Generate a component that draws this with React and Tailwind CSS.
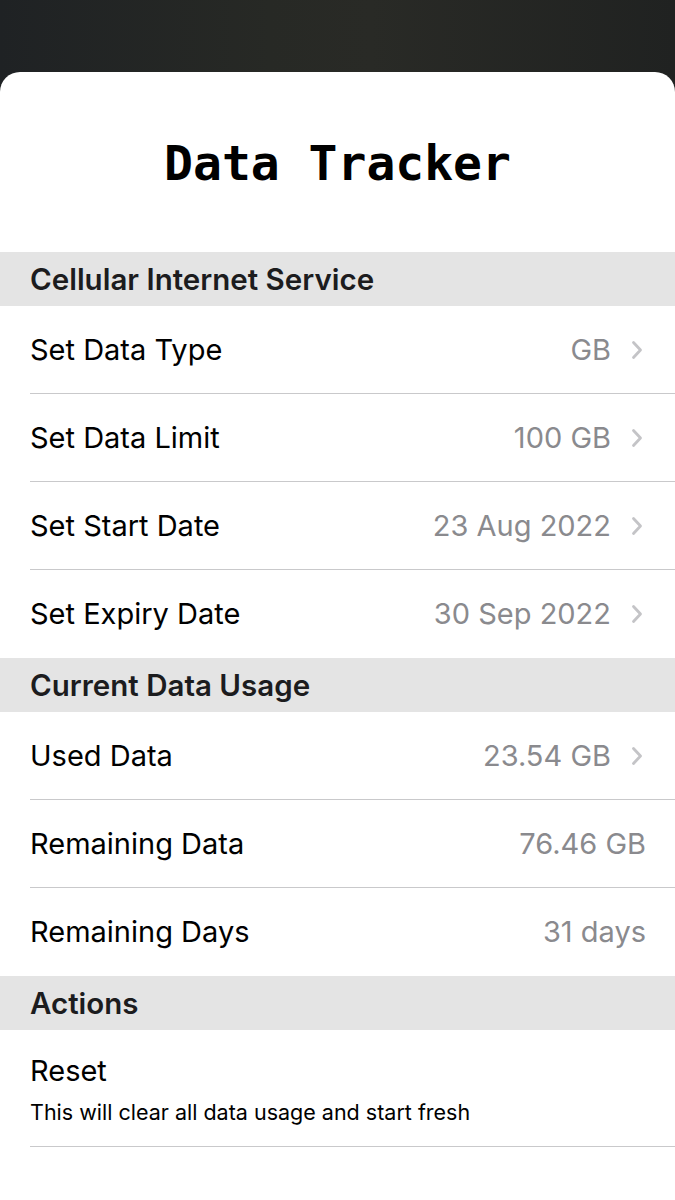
import React from "react";

function Chevron() {
  return (
    <svg width="14" height="20" viewBox="0 0 14 20" className="ml-[19px] shrink-0">
      <path d="M3.5 2.5 L10.5 10 L3.5 17.5" fill="none" stroke="#c4c4c7" strokeWidth="2.8" strokeLinecap="round" strokeLinejoin="round" />
    </svg>
  );
}

function Header({ children }) {
  return (
    <div className="h-[54px] bg-[#e4e4e4] flex items-center pl-[30px] text-[29.5px] font-semibold text-[#1c1c1e]">
      {children}
    </div>
  );
}

function Row({ label, value, chevron = true, divider = true }) {
  return (
    <div className="pl-[30px]">
      <div className={`h-[88px] flex items-center ${chevron ? "pr-[31px]" : "pr-[29px]"} ${divider ? "border-b border-[#c9c9cb]" : ""}`}>
        <span className="text-[29px] text-black">{label}</span>
        <span className="ml-auto text-[29px] text-[#8a8a8e]">{value}</span>
        {chevron && <Chevron />}
      </div>
    </div>
  );
}

export default function App() {
  return (
    <div className="w-[675px] h-[1200px] overflow-hidden bg-[linear-gradient(90deg,#1f2224_0%,#272925_40%,#292a26_55%,#202221_100%)] pt-[72px]" style={{ fontFamily: "Inter, 'Noto Sans', sans-serif" }}>
      <div className="bg-white rounded-t-[20px] h-full">
        <div className="h-[180px] flex items-center justify-center">
          <h1 className="text-[48px] font-bold text-black leading-none pt-[1px]" style={{ fontFamily: "'DejaVu Sans Mono', monospace" }}>
            Data Tracker
          </h1>
        </div>
        <Header>Cellular Internet Service</Header>
        <Row label="Set Data Type" value="GB" />
        <Row label="Set Data Limit" value="100 GB" />
        <Row label="Set Start Date" value="23 Aug 2022" />
        <Row label="Set Expiry Date" value="30 Sep 2022" divider={false} />
        <Header>Current Data Usage</Header>
        <Row label="Used Data" value="23.54 GB" />
        <Row label="Remaining Data" value="76.46 GB" chevron={false} />
        <Row label="Remaining Days" value="31 days" chevron={false} divider={false} />
        <Header>Actions</Header>
        <div className="pl-[30px]">
          <div className="h-[117px] border-b border-[#c9c9cb] flex flex-col justify-center pt-[2px]">
            <span className="text-[29px] text-black leading-[36px]">Reset</span>
            <span className="text-[21.5px] text-black leading-[26px] mt-[10px]">This will clear all data usage and start fresh</span>
          </div>
        </div>
      </div>
    </div>
  );
}
